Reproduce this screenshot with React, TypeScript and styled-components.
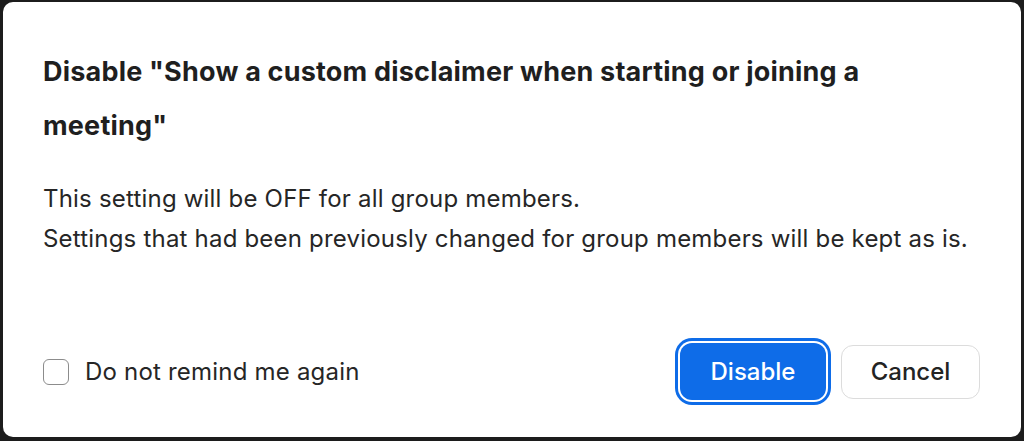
import {createGlobalStyle} from 'styled-components';
import styled from 'styled-components';

const GlobalStyle = createGlobalStyle`
	html, body {
		margin: 0;
		padding: 0;
		background: #1c1c1c;
	}
	#root {
		width: 1024px;
		height: 441px;
		padding: 2px 3px 4px 3px;
		box-sizing: border-box;
	}
`;

const Dialog = styled.div`
	height: 100%;
	box-sizing: border-box;
	background: #ffffff;
	border-radius: 10px;
	padding: 43px 40px 0 40px;
	display: flex;
	flex-direction: column;
	font-family: Inter, 'Noto Sans', sans-serif;
	color: #232323;
`;

const Title = styled.h1`
	margin: 0;
	font-size: 27px;
	font-weight: 700;
	line-height: 54px;
	letter-spacing: 0.2px;
	width: 860px;
	color: #1f1f1f;
`;

const Body = styled.div`
	margin-top: 26px;
	font-size: 24px;
	line-height: 40px;
	letter-spacing: 0.2px;
	color: #262626;
`;

const Footer = styled.div`
	margin-top: auto;
	padding-bottom: 37px;
	display: flex;
	align-items: center;
	justify-content: space-between;
`;

const CheckLabel = styled.label`
	display: flex;
	align-items: center;
	gap: 16px;
	font-size: 24px;
	letter-spacing: 0.2px;
	color: #262626;
	cursor: pointer;
`;

const Box = styled.span`
	width: 26px;
	height: 26px;
	border: 1.5px solid #8c8c8c;
	border-radius: 6px;
	box-sizing: border-box;
	background: #fff;
`;

const Buttons = styled.div`
	display: flex;
	align-items: center;
	gap: 15px;
	margin-right: 1px;
`;

const Button = styled.button<{primary?: boolean}>`
	height: ${(p) => (p.primary ? '57px' : '54px')};
	width: ${(p) => (p.primary ? '146px' : '139px')};
	padding: 0;
	border-radius: 12px;
	font-family: Inter, 'Noto Sans', sans-serif;
	font-size: 24px;
	font-weight: 500;
	cursor: pointer;
	box-sizing: border-box;
	color: ${(p) => (p.primary ? '#ffffff' : '#232323')};
	background: ${(p) => (p.primary ? '#0e6ce8' : '#ffffff')};
	border: ${(p) => (p.primary ? 'none' : '1px solid #dcdcdc')};
	box-shadow: ${(p) => (p.primary ? '0 0 0 2px #ffffff, 0 0 0 5px #0e6ce8' : 'none')};
`;

const App = () => {
	return (
		<>
			<GlobalStyle />
			<Dialog>
				<Title>Disable "Show a custom disclaimer when starting or joining a meeting"</Title>
				<Body>
					This setting will be OFF for all group members.
					<br />
					Settings that had been previously changed for group members will be kept as is.
				</Body>
				<Footer>
					<CheckLabel>
						<Box />
						Do not remind me again
					</CheckLabel>
					<Buttons>
						<Button primary>Disable</Button>
						<Button>Cancel</Button>
					</Buttons>
				</Footer>
			</Dialog>
		</>
	);
};

export default App;
